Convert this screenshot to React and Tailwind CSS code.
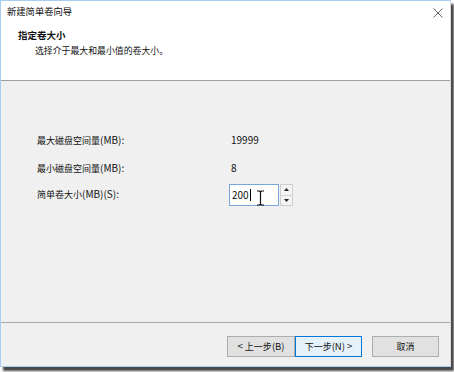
function T({ children, zh = "text-[9px]", en = "text-[10px]" }) {
  const parts = String(children).split(/([\u3000-\u303f\u4e00-\u9fff\uff00-\uffef]+)/).filter(Boolean);
  return (
    <span>
      {parts.map((p, i) =>
        /[\u3000-\u303f\u4e00-\u9fff\uff00-\uffef]/.test(p) ? (
          <span key={i} className={zh}>{p}</span>
        ) : (
          <span key={i} className={en}>{p}</span>
        )
      )}
    </span>
  );
}

export default function App() {
  const font = { fontFamily: '"Noto Sans CJK SC", "Microsoft YaHei", sans-serif' };
  return (
    <div className="w-[454px] h-[372px] bg-white overflow-hidden" style={font}>
      <div className="w-[451px] h-[367px] flex flex-col border border-[#a9cdef] border-r-[#d9d9d9] bg-white shadow-[3px_4px_2px_rgba(40,40,40,0.85)] text-[10px] leading-none text-[#111]">
        {/* title bar */}
        <div className="h-[22px] flex items-center justify-between pl-[6px] pr-[7px]">
          <span className="text-[9.3px]">新建简单卷向导</span>
          <svg width="10" height="10" viewBox="0 0 10 10" className="mt-[1px]">
            <path d="M0.5 0.5 L9.5 9.5 M9.5 0.5 L0.5 9.5" stroke="#666" strokeWidth="1" />
          </svg>
        </div>
        {/* header */}
        <div className="h-[57px] flex flex-col pl-[17px] pt-[8px]">
          <span className="font-bold text-[9.5px]">指定卷大小</span>
          <span className="pl-[17px] mt-[6px] text-[8.9px]">选择介于最大和最小值的卷大小。</span>
        </div>
        <div className="h-px bg-[#a0a0a0]" />
        {/* body */}
        <div className="flex-1 bg-[#f0f0f0] pt-[51px] pl-[36px] relative">
          <div className="flex items-center h-[16px]">
            <span className="w-[192px]"><T>最大磁盘空间量(MB):</T></span>
            <span className="pl-[2px]">19999</span>
          </div>
          <div className="flex items-center h-[16px] mt-[12px]">
            <span className="w-[192px]"><T>最小磁盘空间量(MB):</T></span>
            <span className="pl-[2px]">8</span>
          </div>
          <div className="flex items-center h-[22px] mt-[8px]">
            <span className="w-[192px] mt-[-2px]"><T>简单卷大小(MB)(S):</T></span>
            <div className="flex h-[22px]">
              <div className="w-[50px] h-[22px] bg-white border border-[#7aa7d9] flex items-center pl-[2px]">
                <span>200</span>
                <span className="w-px h-[12px] bg-black ml-[1px]" />
              </div>
              <div className="w-[13px] h-[22px] flex flex-col border border-[#cfcfcf] bg-[#f4f4f4] ml-[1px]">
                <div className="flex-1 flex items-center justify-center border-b border-[#cfcfcf]">
                  <svg width="5" height="3" viewBox="0 0 5 3"><path d="M2.5 0 L5 3 L0 3 Z" fill="#222" /></svg>
                </div>
                <div className="flex-1 flex items-center justify-center">
                  <svg width="5" height="3" viewBox="0 0 5 3"><path d="M0 0 L5 0 L2.5 3 Z" fill="#222" /></svg>
                </div>
              </div>
            </div>
          </div>
          {/* I-beam cursor */}
          <svg className="absolute left-[255px] top-[109px]" width="9" height="16" viewBox="0 0 9 16">
            <path d="M1 1 H3.5 L4.5 2 L5.5 1 H8 M4.5 2 V14 M1 15 H3.5 L4.5 14 L5.5 15 H8" stroke="#111" strokeWidth="1.2" fill="none" />
          </svg>
        </div>
        <div className="h-px bg-[#a8a8a8]" />
        {/* footer */}
        <div className="h-[43px] bg-[#f0f0f0] flex items-start justify-end pt-[13px] pr-[11px]">
          <button className="w-[68px] h-[21px] bg-[#e1e1e1] border border-[#adadad] flex items-center justify-center"><T zh="text-[9px]" en="text-[9.5px]">&lt; 上一步(B)</T></button>
          <button className="w-[67px] h-[21px] bg-[#e5f1fb] border border-[#0078d7] flex items-center justify-center"><T zh="text-[9px]" en="text-[9.5px]">下一步(N) &gt;</T></button>
          <button className="w-[67px] h-[21px] bg-[#e1e1e1] border border-[#adadad] text-[9px] flex items-center justify-center ml-[10px]">取消</button>
        </div>
      </div>
    </div>
  );
}
